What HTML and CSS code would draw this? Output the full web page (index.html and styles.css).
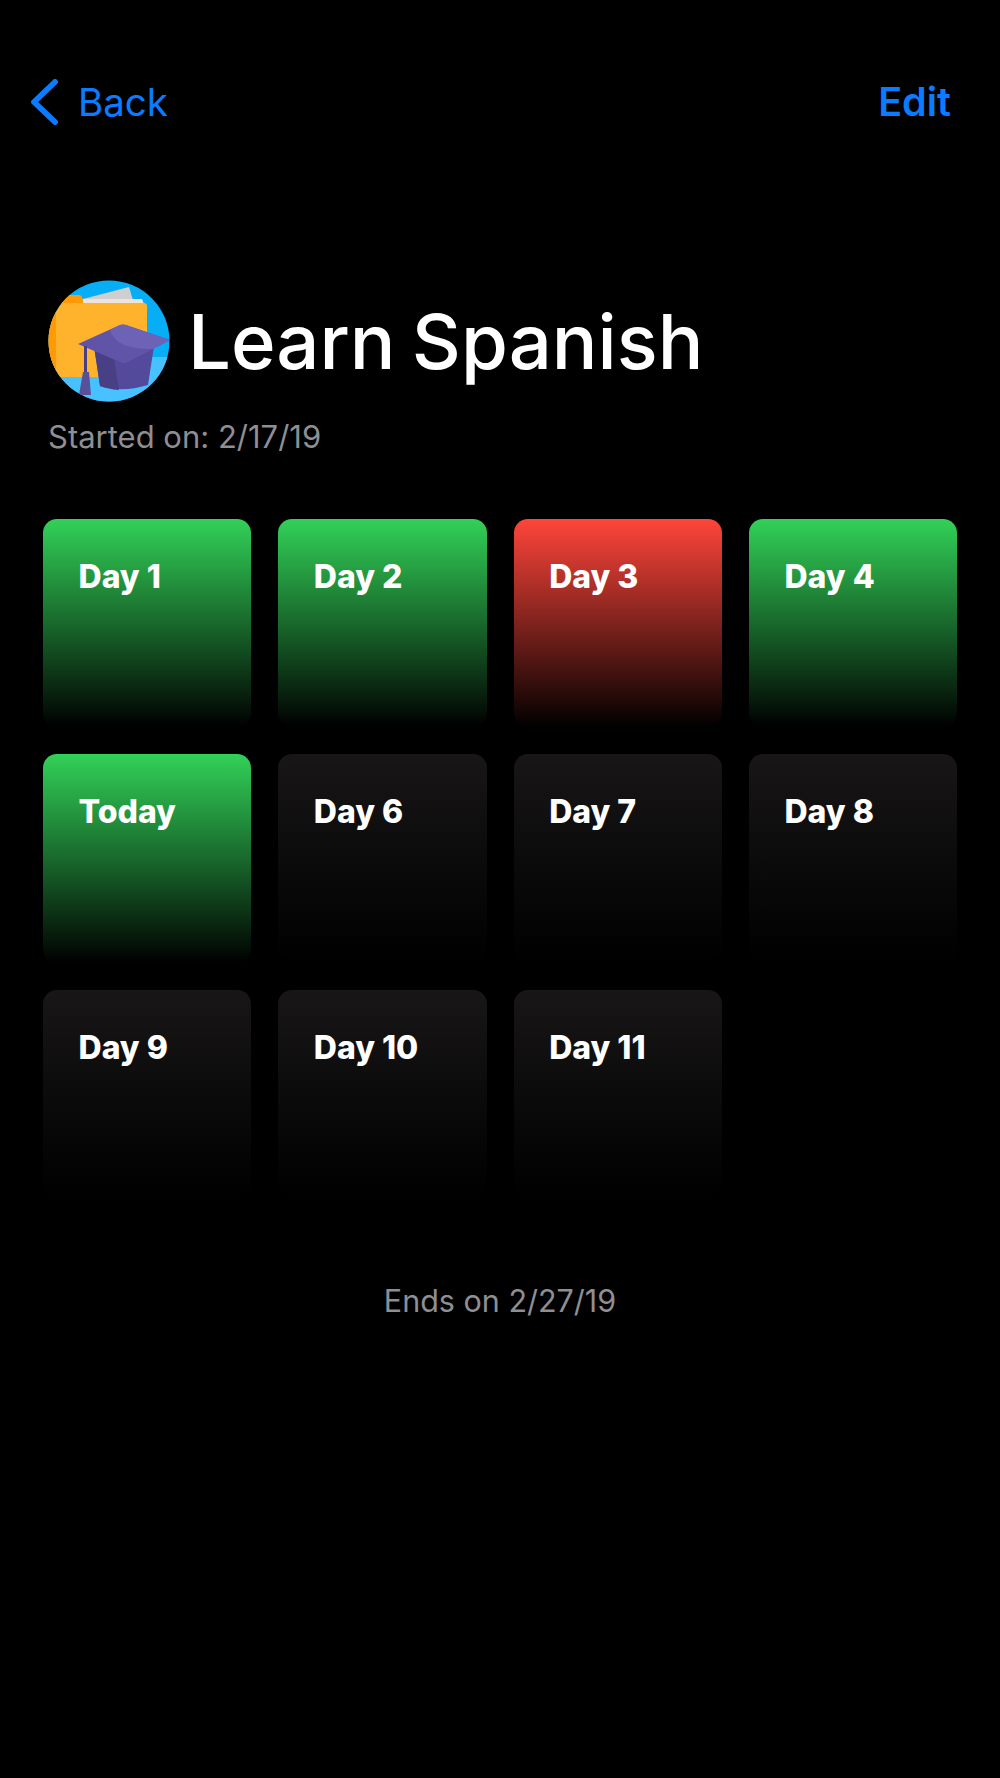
FILE: index.html
```html
<!DOCTYPE html>
<html lang="en">
<head>
  <meta charset="UTF-8" />
  <meta name="viewport" content="width=device-width, initial-scale=1" />
  <title>Learn Spanish</title>
  <link rel="stylesheet" href="styles.css">
</head>
<body>

  <nav class="nav">
    <a href="#" class="nav-back">
      <svg class="nav-chevron" width="28" height="46" viewBox="0 0 28 46" fill="none">
        <path d="M25 3 L4 23 L25 43" stroke="#0a7cff" stroke-width="5.8" stroke-linecap="round" stroke-linejoin="round"/>
      </svg>
      <span>Back</span>
    </a>
    <a href="#" class="nav-edit">Edit</a>
  </nav>

  <header class="goal">
    <div class="goal-title">
      <svg class="goal-icon" width="122" height="122" viewBox="0 0 122 122">
        <defs>
          <clipPath id="circulo"><circle cx="61" cy="61" r="60.5"/></clipPath>
        </defs>
        <g clip-path="url(#circulo)">
          <rect width="122" height="122" fill="#07aef5"/>
          <rect y="77" width="122" height="45" fill="#47c1ff"/>
          <path d="M35 19 L81 7 L85 20 L35 24 Z" fill="#cfcfcf"/>
          <path d="M35 19 H94 L96 24 H35 Z" fill="#eee3da"/>
          <path d="M0 15 H30 Q35 15 35 23 H96 Q99 23 99 26 V97 H0 Z" fill="#ffb32c"/>
          <path d="M0 15 H30 Q35 15 35 23 H12 Q8 23 8 27 V97 H0 Z" fill="#ff9a05"/>
          <path d="M46 66 H106 L100 105 Q74 113 52 106 Z" fill="#534a9b"/>
          <path d="M46 66 H64 L71 110 Q60 109 52 106 Z" fill="#483f85"/>
          <path d="M30 64 L72 45 Q75 44 78 45 L122 60 L80 82 Q76 84 72 82 Z" fill="#5f54a8"/>
          <path d="M62 50 L72 45 Q75 44 78 45 L122 60 L105 69 Q68 70 62 50 Z" fill="#6c62b6"/>
          <rect x="36" y="66" width="3" height="28" fill="#483f85"/>
          <path d="M35 92 H41 L43 115 H31 Z" fill="#5a5099"/>
        </g>
      </svg>
      <h1>Learn Spanish</h1>
    </div>
    <p class="goal-date">Started on: 2/17/19</p>
  </header>

  <section class="days">
    <div class="day day-green">Day 1</div>
    <div class="day day-green">Day 2</div>
    <div class="day day-red">Day 3</div>
    <div class="day day-green">Day 4</div>
    <div class="day day-green">Today</div>
    <div class="day">Day 6</div>
    <div class="day">Day 7</div>
    <div class="day">Day 8</div>
    <div class="day">Day 9</div>
    <div class="day">Day 10</div>
    <div class="day">Day 11</div>
  </section>

  <p class="ends">Ends on 2/27/19</p>

</body>
</html>
```

FILE: styles.css
```css
body {
  margin: 0;
  height: 1778px;
  background: #000;
  color: #fff;
  font-family: Inter, "Liberation Sans", sans-serif;
}

.nav {
  display: flex;
  justify-content: space-between;
  align-items: center;
  height: 46px;
  padding: 79px 49px 0 30px;
}

.nav a {
  color: #0a7cff;
  text-decoration: none;
  font-size: 38.5px;
}

.nav-back {
  display: flex;
  align-items: center;
  gap: 20px;
  font-weight: 400;
}

.nav a.nav-edit {
  font-size: 39.5px;
  font-weight: 600;
}

.goal {
  padding: 155px 0 0 48px;
}

.goal-title {
  display: flex;
  align-items: center;
  gap: 18px;
}

.goal-title h1 {
  margin: 0;
  font-size: 76px;
  font-weight: 500;
  word-spacing: -4px;
}

.goal-date {
  margin: 17px 0 0;
  font-size: 31px;
  line-height: 36px;
  color: #8e8e93;
}

.days {
  display: grid;
  grid-template-columns: repeat(4, 208.33px);
  grid-auto-rows: 208.33px;
  gap: 27px;
  padding: 64px 0 0 43px;
}

.day {
  box-sizing: border-box;
  padding: 40px 0 0 35.5px;
  border-radius: 14px;
  font-size: 32px;
  line-height: 36px;
  font-weight: 800;
  background: linear-gradient(#181617, #000);
}

.day-green {
  background: linear-gradient(#32d158, #000);
}

.day-red {
  background: linear-gradient(#ff453a, #000);
}

.ends {
  margin: 85px 0 0;
  text-align: center;
  font-size: 30.5px;
  line-height: 36px;
  color: #8e8e93;
}
```
